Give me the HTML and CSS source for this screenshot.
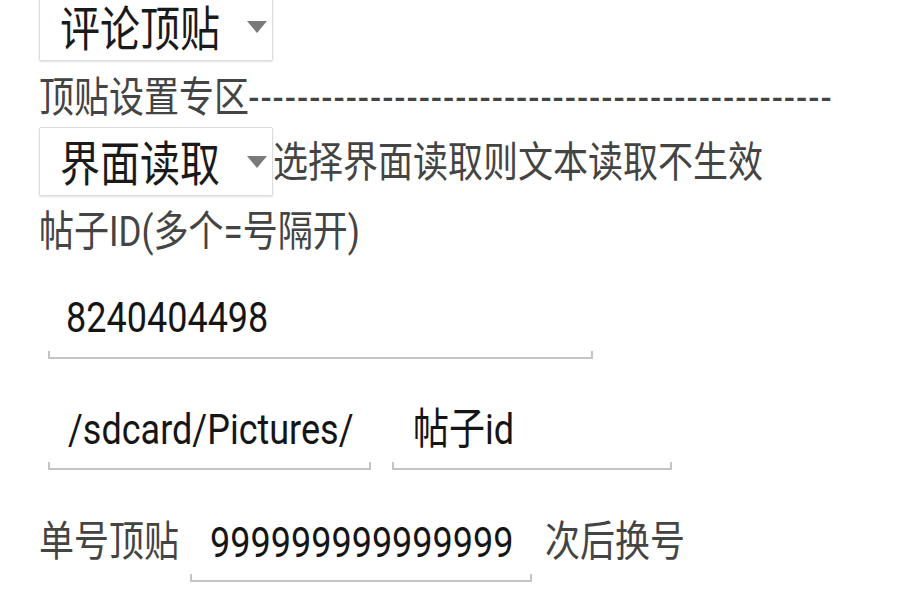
FILE: index.html
```html
<!DOCTYPE html>
<html lang="zh-CN">
<head>
<meta charset="utf-8">
<title>评论顶贴</title>
<link rel="stylesheet" href="styles.css">
</head>
<body>
<div class="screen">
  <div class="spinner spinner-top">
    <span class="t spinner-text">评论顶贴</span>
    <span class="arrow"></span>
  </div>
  <div class="section-label"><span class="t">顶贴设置专区<span class="dashes">------------------------------------------------</span></span></div>
  <div class="row">
    <div class="spinner">
      <span class="t spinner-text">界面读取</span>
      <span class="arrow"></span>
    </div>
    <span class="t hint">选择界面读取则文本读取不生效</span>
  </div>
  <div class="label id-label"><span class="t">帖子ID(多个=号隔开)</span></div>
  <div class="edit edit-wide"><span class="t">8240404498</span></div>
  <div class="row edit-row">
    <div class="edit edit-path"><span class="t">/sdcard/Pictures/</span></div>
    <div class="edit edit-name"><span class="t">帖子id</span></div>
  </div>
  <div class="row count-row">
    <span class="label"><span class="t">单号顶贴</span></span>
    <div class="edit edit-count"><span class="t">999999999999999</span></div>
    <span class="label after"><span class="t">次后换号</span></span>
  </div>
</div>
</body>
</html>
```
FILE: styles.css
```css
* { box-sizing: border-box; }
html, body { margin: 0; padding: 0; background: #ffffff; }
body {
  width: 900px;
  height: 600px;
  overflow: hidden;
  font-family: Roboto, "Noto Sans CJK SC", sans-serif;
}
.screen { padding-left: 39px; }
.t { display: inline-block; transform: scaleY(1.2); white-space: nowrap; }

.spinner {
  width: 234px;
  height: 69px;
  flex: none;
  border: 1px solid #dcdcdc;
  border-radius: 2px;
  box-shadow: 0 1px 2px rgba(0, 0, 0, 0.12);
  display: flex;
  align-items: center;
  justify-content: space-between;
  padding: 0 5px 0 20px;
}
.spinner-top { margin-top: -8px; }
.spinner-text {
  font-size: 40px;
  line-height: 50px;
  color: #1a1a1a;
  margin-top: 7px;
}
.arrow {
  width: 0;
  height: 0;
  border-left: 10px solid transparent;
  border-right: 10px solid transparent;
  border-top: 12px solid #7a7a7a;
}

.section-label {
  height: 66px;
  padding-top: 10px;
  font-size: 35px;
  line-height: 56px;
  color: #444444;
  white-space: nowrap;
}
.dashes { letter-spacing: 2.5px; }

.row { display: flex; align-items: center; }
.hint {
  font-size: 35px;
  line-height: 50px;
  color: #444444;
  margin-top: 5px;
}

.label {
  font-size: 35px;
  line-height: 60px;
  color: #444444;
  white-space: nowrap;
}
.id-label { margin-top: 7px; }

.edit {
  position: relative;
  font-size: 36px;
  line-height: 60px;
  color: #151515;
  padding-left: 18px;
  padding-bottom: 9px;
  border-bottom: 2px solid #c4c4c4;
  white-space: nowrap;
}
.edit::before,
.edit::after {
  content: "";
  position: absolute;
  bottom: -2px;
  width: 2px;
  height: 8px;
  background: #c4c4c4;
}
.edit::before { left: 0; }
.edit::after { right: 0; }

.edit-wide { margin: 25px 0 0 9px; width: 545px; }

.edit-row { margin: 41px 0 0 9px; align-items: flex-start; }
.edit-path { width: 323px; padding-left: 20px; padding-bottom: 8px; }
.edit-name { width: 280px; margin-left: 21px; padding-left: 21px; padding-bottom: 8px; }

.count-row { margin-top: 43px; align-items: flex-start; }
.edit-count { width: 342px; margin-left: 11px; padding-left: 20px; padding-bottom: 7px; }
.label.after { margin-left: 13px; }
```
